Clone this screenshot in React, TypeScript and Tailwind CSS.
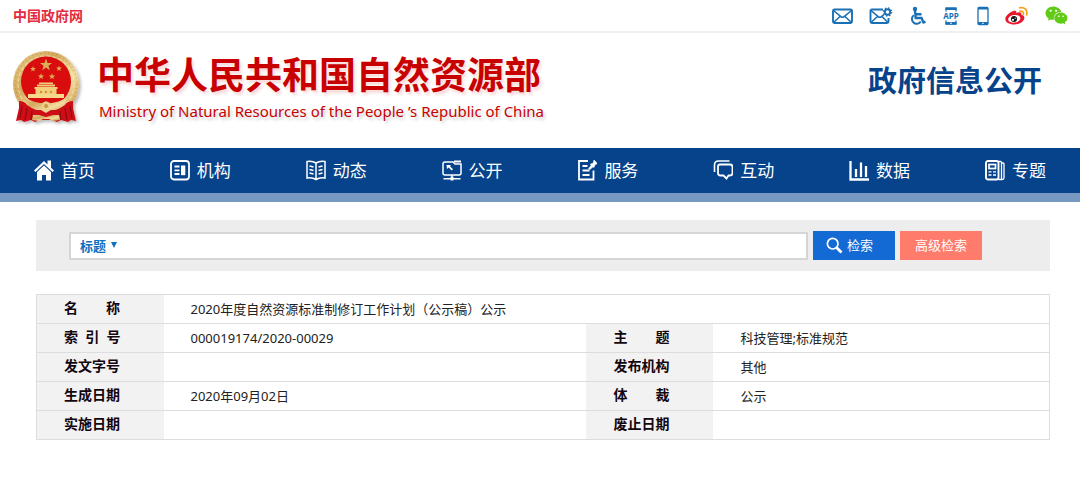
import React from 'react';
import { FaWeixin } from 'react-icons/fa';

const star = (cx: number, cy: number, r: number) =>
  Array.from({ length: 10 }, (_, i) => {
    const radius = i % 2 ? r * 0.4 : r;
    const a = (Math.PI / 5) * i - Math.PI / 2;
    return `${(cx + radius * Math.cos(a)).toFixed(2)},${(cy + radius * Math.sin(a)).toFixed(2)}`;
  }).join(' ');

function Emblem() {
  return (
    <svg width="76" height="82" viewBox="0 0 76 82" aria-hidden="true" className="shrink-0">
      <defs>
        <linearGradient id="gold" x1="0" y1="0" x2="1" y2="1">
          <stop offset="0" stopColor="#e9cf8c" />
          <stop offset="0.35" stopColor="#d3a95e" />
          <stop offset="0.65" stopColor="#f3dda0" />
          <stop offset="1" stopColor="#c08c3a" />
        </linearGradient>
        <filter id="soft" x="-20%" y="-20%" width="150%" height="150%">
          <feDropShadow dx="2" dy="2" stdDeviation="1.6" floodColor="#555" floodOpacity="0.4" />
        </filter>
      </defs>
      <g filter="url(#soft)">
        <circle cx="35" cy="36" r="33" fill="url(#gold)" />
        <circle cx="35" cy="36" r="31" fill="none" stroke="#a5742c" strokeWidth="1.2" strokeDasharray="1 3" opacity="0.45" />
        <circle cx="35" cy="36" r="28" fill="none" stroke="#fbeec2" strokeWidth="1.5" strokeDasharray="4 2" opacity="0.5" />
        <circle cx="35" cy="33.500" r="25" fill="#d9090f" />
        <path d="M8 53c4 0 6 1 8 4l10 5 9-3 9 3 10-5c2-3 4-4 8-4l0 7 3 13-5-1-3 2-7-2-4 2-5-2H29l-5 2-4-2-7 2-3-2-5 1 3-13z" fill="#cf0c16" />
        <path d="M11 58l-2 12M16 60l-2 12M21 63l-1 9M59 58l2 12M54 60l2 12M49 63l1 9" stroke="#8f0710" strokeWidth="1.2" fill="none" />
        <path d="M13 48c6 5 13 7 18 7l4-2 4 2c5 0 12-2 18-7l-4 9c-5 5-10 5-13 5l-5 3-5-3c-3 0-8 0-13-5z" fill="url(#gold)" />
        <circle cx="35" cy="58" r="4" fill="#ecd28c" />
        <circle cx="35" cy="58" r="2" fill="#c99a47" />
        <path d="M22 67h6l7 2 7-2h6l1 5-7 1-4-2h-6l-4 2-7-1z" fill="url(#gold)" />
      </g>
      <path d="M17 46h36v4H17z" fill="#f6d88a" />
      <path d="M24.500 40.500h21V46h-21zM23.500 39h23v2h-23zM26 36.500h18v2H26zM28 34.500h14V36H28z" fill="#f3cf7c" />
      <path d="M29 44h2M34 44h2M39 44h2" stroke="#b67c2c" strokeWidth="1.500" />
      <g fill="#dcae55">
        <polygon points={star(35, 17, 6.4)} />
        <polygon points={star(22, 21, 3.1)} />
        <polygon points={star(48, 20.500, 3.1)} />
        <polygon points={star(30, 28.500, 3.400)} />
        <polygon points={star(41, 28.500, 3.400)} />
      </g>
    </svg>
  );
}

const line = { fill: 'none', stroke: 'currentColor' } as const;

const MailIcon = () => (
  <svg width="22" height="18" viewBox="0 0 22 18" {...line} strokeWidth="1.900">
    <rect x="2" y="2.500" width="19" height="13.500" rx="1.500" />
    <path d="M2.500 3.500l7.400 6.200q1.600 1 3.200 0L20.500 3.500M2.500 15.500l6.500-6M20.500 15.500l-6.500-6" strokeWidth="1.600" />
  </svg>
);

const MailGearIcon = () => (
  <svg width="24" height="18" viewBox="0 0 24 18" {...line} strokeWidth="1.900">
    <path d="M14 2.500H3q-1.500 0-1.500 1.500v10.500Q1.500 16 3 16h15q1.500 0 1.500-1.500V11" />
    <path d="M2 3.500l7.200 6.200q1.600 1 3.200 0L15 7.500M2 15.500l6.500-6M19 15.500l-6-6" strokeWidth="1.600" />
    <circle cx="18.500" cy="5" r="2.700" />
    <circle cx="18.500" cy="5" r="4" strokeWidth="1.500" strokeDasharray="1.500 1.640" />
  </svg>
);

const WheelchairIcon = () => (
  <svg width="18" height="20" viewBox="0 0 18 20" {...line} strokeWidth="2">
    <circle cx="6" cy="3" r="2.200" fill="currentColor" stroke="none" />
    <path d="M6 4.500l.7 7.500h5.800l2 4.500 2-.8M6.500 8.200h6" strokeWidth="2.400" />
    <path d="M4.800 9.200a4.800 4.800 0 1 0 7 6.300" />
  </svg>
);

const AppIcon = () => (
  <svg width="18" height="20" viewBox="0 0 18 20">
    <path d="M3 5.500V2h10v3.500M3 14.500V18h10v-3.500" {...line} strokeWidth="1.200" />
    <path d="M2.500 1.500h11V4h-11zM2.500 16h11v2.700h-11z" fill="currentColor" />
    <circle cx="8" cy="17.300" r=".8" fill="#fff" />
    <text x="8" y="12.800" textAnchor="middle" fontSize="8" fontWeight="700" fontFamily="Noto Sans, sans-serif" fill="currentColor">APP</text>
  </svg>
);

const PhoneIcon = () => (
  <svg width="12" height="20" viewBox="0 0 12 20">
    <rect x="1" y="1.500" width="10" height="17" rx="1" {...line} strokeWidth="1.300" />
    <path d="M1 1.500h10v2H1zM1 16h10v2.500H1z" fill="currentColor" />
    <circle cx="6" cy="17.300" r=".8" fill="#fff" />
  </svg>
);

const WeiboIcon = () => (
  <svg width="24" height="20" viewBox="0 0 24 20">
    <path d="M8.500 5c2-.7 3.300.1 2.800 2 3-1.300 5.500-.8 5 1.800 2.800.8 3.800 2.400 2.700 4.700-1.400 2.900-5.200 4.900-9.800 4.900-4.900 0-8.900-2.300-8.900-5.500C.3 10 4.700 6 8.500 5z" fill="#e6162d" />
    <ellipse cx="9.300" cy="12.800" rx="6.200" ry="3.800" fill="#fff" transform="rotate(-8 9.300 12.800)" />
    <circle cx="9" cy="13" r="3" fill="#111" />
    <circle cx="8" cy="13.800" r="1.100" fill="#fff" />
    <circle cx="10.200" cy="12.200" r=".6" fill="#fff" />
    <path d="M15 5.200c2.500-.5 4 1 3.300 3.300M14.700 1.800c4.800-1.200 8.300 2.500 6.900 7.200" fill="none" stroke="#f9a11b" strokeWidth="1.700" strokeLinecap="round" />
  </svg>
);

const HomeIcon = () => (
  <>
    <path d="M10 1L0 10.500l1.500 1.500L10 4l8.500 8 1.500-1.500-3-2.800V.5h-3.500v4z" fill="currentColor" />
    <path d="M10 5.500L3 12v8.500h5V15h4v5.500h5V12z" fill="currentColor" />
  </>
);
const OrgIcon = () => (
  <>
    <rect x="1" y="1" width="18" height="18.500" rx="3" {...line} strokeWidth="1.800" />
    <path d="M4.500 6.500h5M4.500 10.300h5M4.500 14h5" {...line} strokeWidth="1.800" />
    <path d="M11 5.500h4.300v9.700H11z" fill="currentColor" />
  </>
);
const BookIcon = () => (
  <>
    <path d="M10 3Q6 .5 1 1.500v16.500q5-1 9 1.500 4-2.500 9-1.500V1.500Q14 .5 10 3zM10 3v16" {...line} strokeWidth="1.500" />
    <path d="M3.500 6l4 1M3.500 9.500l4 1M3.500 13l4 1M16.500 6l-4 1M16.500 9.500l-4 1M16.500 13l-4 1" {...line} strokeWidth="1.300" />
  </>
);
const OpenIcon = () => (
  <>
    <path d="M11 2H3Q1 2 1 4v9q0 2 2 2h14q2 0 2-2V4h-6zM10 15v3M1.500 18.800h17" {...line} strokeWidth="1.500" />
    <path d="M12 .5h7v2h-7zM8.500 16.800h3v3.700h-3zM4.500 5h4.500L8 6.300l3 3L9.700 10.500l-3-3L5 9z" fill="currentColor" />
  </>
);
const ServiceIcon = () => (
  <>
    <path d="M11 1H2v18.500h14.500V10.500" {...line} strokeWidth="1.800" />
    <path d="M5.500 6h5M5.500 10.500h7M5.500 15h7" {...line} strokeWidth="1.800" />
    <path d="M17 0l3.500 3.500-2.700 1.500-.7 2.300-1.300-.2-3.300 2.600-1-1 2.500-3.300-.5-1.300 2.600-.8z" fill="currentColor" stroke="currentColor" strokeWidth=".6" />
  </>
);
const ChatIcon = () => (
  <>
    <path d="M1.500 12V5q0-4 4-4h11" {...line} strokeWidth="1.600" />
    <path d="M7 4.500h10q2.500 0 2.500 2.500v6q0 2.500-2.500 2.500h-1.500l-2 3-3-3H7.500Q5 15.500 5 13V6.500q0-2 2-2z" {...line} strokeWidth="1.800" />
  </>
);
const DataIcon = () => <path d="M1.500 1v18.500H20M7 9v8M12 2.500V17M17 6v11" {...line} strokeWidth="2.300" />;
const TopicIcon = () => (
  <>
    <rect x="1" y="1" width="12.500" height="18.500" rx="2" {...line} strokeWidth="1.900" />
    <path d="M13.500 1.500h2q1 0 1 1v17h-3M16.500 3h1.500q1 0 1 1v14q0 1.500-2 1.500" {...line} strokeWidth="1.300" />
    <rect x="4" y="4.500" width="6.500" height="4" {...line} strokeWidth="1.700" />
    <path d="M3.500 11.800h3M8 11.800h3M3.500 15h3M8 15h3" {...line} strokeWidth="1.300" />
  </>
);

const navItems: [string, React.FC][] = [
  ['首页', HomeIcon],
  ['机构', OrgIcon],
  ['动态', BookIcon],
  ['公开', OpenIcon],
  ['服务', ServiceIcon],
  ['互动', ChatIcon],
  ['数据', DataIcon],
  ['专题', TopicIcon],
];

const rows = [
  ['索\u00a0 引\u00a0 号', '000019174/2020-00029', '主\u3000\u3000题', '科技管理;标准规范'],
  ['发文字号', '', '发布机构', '其他'],
  ['生成日期', '2020年09月02日', '体\u3000\u3000裁', '公示'],
  ['实施日期', '', '废止日期', ''],
];

function Label({ children }: { children: React.ReactNode }) {
  return (
    <th scope="row" className="bg-[#f2f2f2] pb-0.5 pl-[27px] text-left text-sm font-bold text-[#12060f]">
      {children}
    </th>
  );
}

function Value({ children, span }: { children: React.ReactNode; span?: number }) {
  return (
    <td colSpan={span} className="pt-0.5 pl-[27px] text-[13px] text-[#222]">
      {children}
    </td>
  );
}

export default function App() {
  return (
    <div className="bg-white font-['Noto_Sans','Noto_Sans_CJK_SC',sans-serif]">
      <div className="flex h-[33px] items-center justify-between border-b-2 border-[#f0f0f0] pr-3 pl-[13px]">
        <a href="#gov" className="text-sm font-bold text-[#e32a40]">中国政府网</a>
        <div className="flex items-center gap-4 text-[#1a70b4]">
          <a href="#mail" aria-label="邮箱"><MailIcon /></a>
          <a href="#mail-settings" aria-label="邮箱设置"><MailGearIcon /></a>
          <a href="#accessible" aria-label="无障碍"><WheelchairIcon /></a>
          <a href="#app" aria-label="客户端"><AppIcon /></a>
          <a href="#mobile" aria-label="手机版"><PhoneIcon /></a>
          <a href="#weibo" aria-label="微博"><WeiboIcon /></a>
          <a href="#wechat" aria-label="微信" className="text-[#62cb18]"><FaWeixin size={23} /></a>
        </div>
      </div>

      <header className="flex h-[115px] items-center justify-between pr-[38px] pb-1 pl-[11px]">
        <div className="flex items-center gap-[10px]">
          <Emblem />
          <div className="text-[#c80000]">
            <h1 className="text-[37px] leading-[44px] font-bold [text-shadow:2px_3px_3px_rgba(200,0,0,0.15)]">
              中华人民共和国自然资源部
            </h1>
            <p className="pl-0.5 text-[15px] leading-7 [text-shadow:2px_3px_3px_rgba(0,0,0,0.2)]">
              Ministry of Natural Resources of the People ’s Republic of China
            </p>
          </div>
        </div>
        <h2 className="pb-4 text-[29px] font-bold text-[#07438a]">政府信息公开</h2>
      </header>

      <nav className="border-b-9 border-[#7799c1] bg-[#07438a]">
        <ul className="flex h-[45px] items-center justify-between px-[34px]">
          {navItems.map(([name, Icon]) => (
            <li key={name}>
              <a href={`#${name}`} className="flex items-center gap-[7px] text-[17px] whitespace-nowrap text-white">
                <svg width="20" height="21" viewBox="0 0 20 21" aria-hidden="true">
                  <Icon />
                </svg>
                {name}
              </a>
            </li>
          ))}
        </ul>
      </nav>

      <main className="pt-[18px] pr-[30px] pl-9">
        <form className="flex h-[51px] items-center gap-[5px] bg-[#ededed] pr-17 pl-[33px]" onSubmit={(e) => e.preventDefault()}>
          <div className="flex h-7 flex-1 items-center border-2 border-[#d5d5d5] bg-white">
            <div className="relative">
              <select aria-label="检索字段" className="block h-6 w-16 appearance-none bg-transparent pl-[9px] text-[13px] leading-5 font-bold text-[#1070bd] outline-none">
                <option>标题</option>
              </select>
              <svg width="6" height="6" viewBox="0 0 6 6" className="pointer-events-none absolute top-2 right-[18px] fill-[#1070bd]" aria-hidden="true">
                <path d="M0 0h6L3 6z" />
              </svg>
            </div>
            <input type="text" aria-label="检索内容" className="h-full min-w-0 flex-1 px-1 text-[13px] outline-none" />
          </div>
          <button type="submit" className="flex h-[29px] w-[82px] items-center gap-1 bg-[#146ad5] pl-[13px] text-[13px] text-white">
            <svg width="17" height="17" viewBox="0 0 17 17" {...line} aria-hidden="true">
              <circle cx="6.700" cy="6.700" r="5.300" strokeWidth="1.700" />
              <path d="M10.500 10.500l5 5" strokeWidth="2.800" />
            </svg>
            检索
          </button>
          <button type="button" className="h-[29px] w-[82px] bg-[#ff7b6b] text-[13px] text-white">高级检索</button>
        </form>

        <table className="mt-[23px] w-full table-fixed border-collapse border border-[#ddd]">
          <colgroup>
            <col className="w-[127px]" />
            <col />
            <col className="w-[127px]" />
            <col className="w-[336px]" />
          </colgroup>
          <tbody>
            <tr className="h-[29px] border-b border-[#ddd]">
              <Label>{'名\u3000\u3000称'}</Label>
              <Value span={3}>2020年度自然资源标准制修订工作计划（公示稿）公示</Value>
            </tr>
            {rows.map(([a, b, c, d]) => (
              <tr key={a} className="h-[29px] border-b border-[#ddd]">
                <Label>{a}</Label>
                <Value>{b}</Value>
                <Label>{c}</Label>
                <Value>{d}</Value>
              </tr>
            ))}
          </tbody>
        </table>
      </main>
    </div>
  );
}
